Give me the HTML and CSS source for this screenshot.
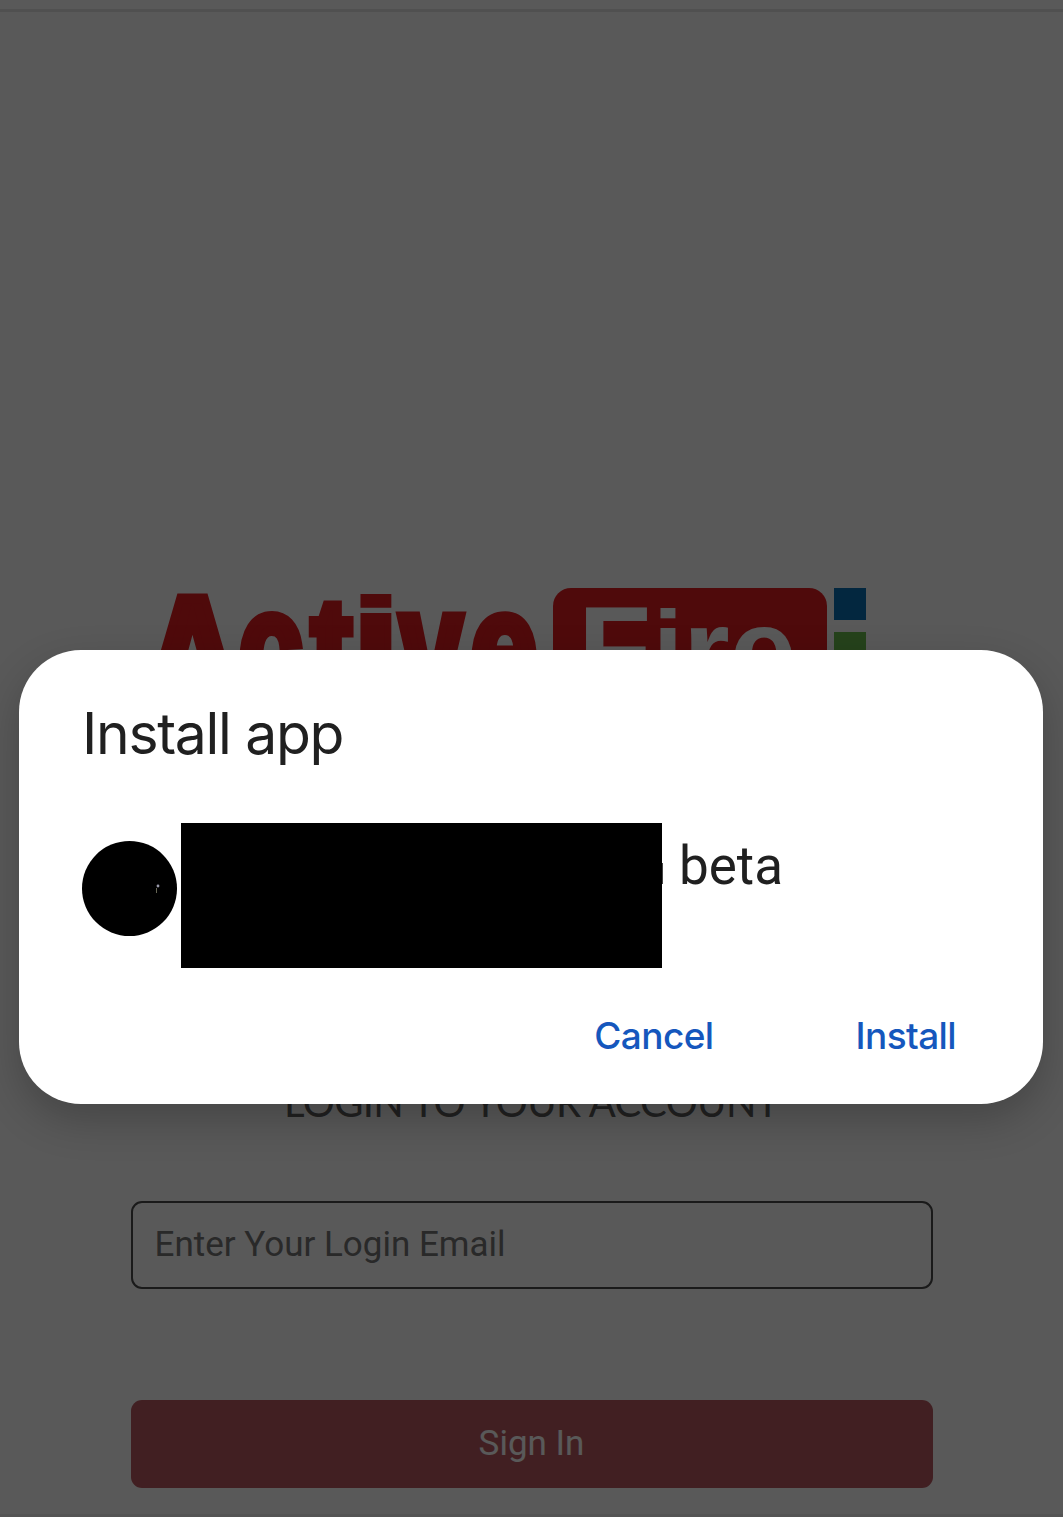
FILE: index.html
```html
<!DOCTYPE html>
<html lang="en">
<head>
<meta charset="utf-8">
<title>Install app</title>
<link rel="stylesheet" href="styles.css">
</head>
<body>
<main class="page">
  <svg class="logo" viewBox="0 0 712 106" role="img" aria-label="ActiveFire">
    <g class="logo-active">
      <text class="logo-a" x="37.500" y="137" textLength="104" lengthAdjust="spacingAndGlyphs">A</text>
      <text class="logo-round" x="115.500" y="116" textLength="64" lengthAdjust="spacingAndGlyphs">c</text>
      <text x="176.500" y="101" textLength="39" lengthAdjust="spacingAndGlyphs">t</text>
      <text class="logo-i" x="221" y="80" textLength="48" lengthAdjust="spacingAndGlyphs">i</text>
      <text class="logo-v" x="276" y="122" textLength="61" lengthAdjust="spacingAndGlyphs">v</text>
      <text class="logo-round" x="349" y="116" textLength="67" lengthAdjust="spacingAndGlyphs">e</text>
    </g>
    <rect class="logo-plate" x="398" y="2" width="274" height="104" rx="18"/>
    <g class="logo-fire">
      <text x="423" y="104">F</text>
      <text class="logo-fire-i" x="498" y="95" textLength="30" lengthAdjust="spacingAndGlyphs">i</text>
      <text x="528" y="106">re</text>
    </g>
    <rect class="logo-blue" x="679" y="2" width="32" height="32"/>
    <rect class="logo-green" x="679" y="46" width="32" height="32"/>
  </svg>
  <h1 class="heading">LOGIN TO YOUR ACCOUNT</h1>
  <input class="email" type="email" placeholder="Enter Your Login Email">
  <button class="signin">Sign In</button>
</main>
<div class="scrim">
  <section class="dialog">
    <h2 class="title">Install app</h2>
    <div class="app">
      <span class="app-icon"><svg viewBox="0 0 95 95"><circle cx="76" cy="45" r="1.4" fill="#99a"/><path d="M74.500 47v5" stroke="#665" stroke-width="1"/></svg></span>
      <span class="redacted"></span>
      <span class="app-name">beta</span>
    </div>
    <div class="actions">
      <button class="action cancel">Cancel</button>
      <button class="action install">Install</button>
    </div>
  </section>
</div>
</body>
</html>
```
FILE: styles.css
```css
* { box-sizing: border-box; }
body { margin: 0; height: 1517px; overflow: hidden; background: #fff; }
.page {
  display: flex;
  flex-direction: column;
  align-items: center;
  height: 1517px;
  padding-top: 586px;
  border-bottom: 3px solid #f0f0f0;
  background: linear-gradient(#e6e6e6, #e6e6e6) 0 9px / 100% 3px no-repeat #fff;
}
.logo { display: block; flex: none; align-self: flex-start; width: 712px; height: 106px; margin-left: 155px; }
.logo-active {
  font: 700 125px "Liberation Sans", sans-serif;
  text-anchor: middle;
  fill: #e21d22;
  stroke: #e21d22;
  stroke-width: 10px;
}
.logo-a { font-size: 180px; }
.logo-round { font-size: 160px; }
.logo-v { font-size: 170px; stroke-width: 12px; }
.logo-i { font-size: 97px; stroke-width: 4px; }
.logo-plate { fill: #e21d22; }
.logo-fire { font: 700 120px "Liberation Sans", sans-serif; fill: #fff; }
.logo-fire-i { font-size: 101px; }
.logo-blue { fill: #0b6fb4; }
.logo-green { fill: #6abd4d; }
.heading {
  margin: 380px 0 0;
  font: 400 40px/60px Lato, sans-serif;
  letter-spacing: -.6px;
  color: #5e5e5e;
  white-space: nowrap;
}
.email {
  width: 802px;
  height: 88px;
  margin-top: 69px;
  padding: 0 22px 2px;
  border: 2px solid #4a4a4a;
  border-radius: 11px;
  background: #fff;
  font: 400 35px Roboto, sans-serif;
}
.email::placeholder { color: #757575; opacity: 1; }
.signin {
  width: 802px;
  height: 88px;
  margin-top: 111px;
  padding: 0 0 2px;
  border: 0;
  border-radius: 11px;
  background: #ba5b61;
  color: #fff;
  font: 400 35px Roboto, sans-serif;
}
.scrim {
  position: absolute;
  inset: 0;
  padding: 650px 20px 0 19px;
  background: rgba(0, 0, 0, .65);
}
.dialog {
  height: 454px;
  padding: 52px 64px 0 63px;
  border-radius: 62px;
  background: #fff;
  box-shadow: 0 16px 40px rgba(0, 0, 0, .22);
  color: #202020;
}
.title { margin: 0; font: 400 57px/64px Inter, sans-serif; letter-spacing: -1.3px; }
.app { display: flex; align-items: flex-start; margin-top: 57px; }
.app-icon { width: 95px; height: 95px; margin: 18px 4px 0 0; border-radius: 50%; background: #000; }
.app-icon svg { display: block; }
.redacted { position: relative; width: 481px; height: 145px; background: #000; }
.redacted::after { content: ""; position: absolute; left: 100%; top: 40px; width: 1px; height: 21px; background: #444; }
.app-name { margin: 12px 0 0 17px; font: 400 53px/62px Roboto, sans-serif; }
.actions { display: flex; justify-content: flex-end; gap: 142px; padding: 43px 23px 0 0; }
.action { padding: 0; border: 0; background: none; color: #1557bd; font: 500 37px/50px Inter, sans-serif; letter-spacing: -.6px; }
```
